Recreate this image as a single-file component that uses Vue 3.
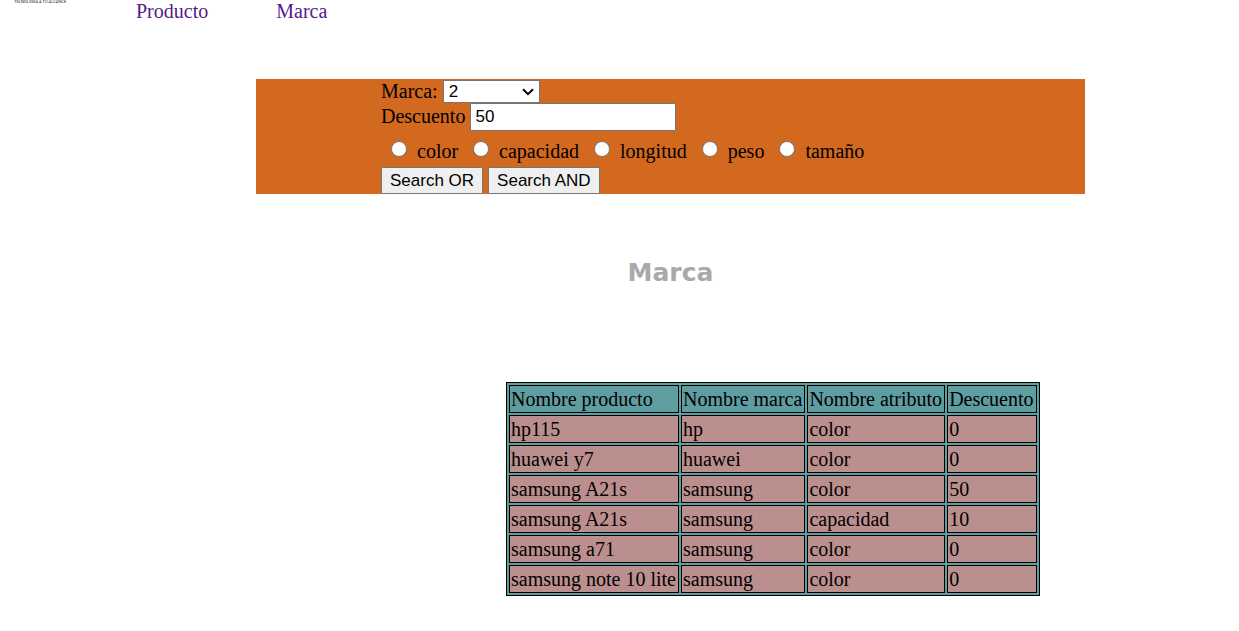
<script setup>
import { ref } from 'vue'

const marca = ref('2')
const descuento = ref('50')
const atributo = ref('')
const marcas = ['1', '2', '3']
const atributos = ['color', 'capacidad', 'longitud', 'peso', 'tamaño']
const columnas = ['Nombre producto', 'Nombre marca', 'Nombre atributo', 'Descuento']
const filas = [
  ['hp115', 'hp', 'color', '0'],
  ['huawei y7', 'huawei', 'color', '0'],
  ['samsung A21s', 'samsung', 'color', '50'],
  ['samsung A21s', 'samsung', 'capacidad', '10'],
  ['samsung a71', 'samsung', 'color', '0'],
  ['samsung note 10 lite', 'samsung', 'color', '0'],
]
</script>

<template>
  <div class="page">
    <header class="top">
      <div class="logo"><span>TECNOLOGÍA A TU ALCANCE</span></div>
      <nav class="menu">
        <a href="#producto">Producto</a>
        <a href="#marca">Marca</a>
      </nav>
    </header>

    <form class="search" @submit.prevent>
      <div class="row field">
        <label for="marca">Marca:</label>
        <select id="marca" v-model="marca">
          <option v-for="m in marcas" :key="m" :value="m">{{ m }}</option>
        </select>
        <svg class="chevron" viewBox="0 0 12 8" aria-hidden="true">
          <path d="M1 1.2 6 6.2 11 1.2" fill="none" stroke="#000" stroke-width="2" />
        </svg>
      </div>
      <div class="row field">
        <label for="descuento">Descuento</label>
        <input id="descuento" v-model="descuento" class="text" type="text" />
      </div>
      <div class="row radios">
        <label v-for="a in atributos" :key="a">
          <input v-model="atributo" type="radio" name="atributo" :value="a" />
          <span>{{ a }}</span>
        </label>
      </div>
      <div class="row">
        <button type="submit">Search OR</button>
        <button type="submit">Search AND</button>
      </div>
    </form>

    <h1>Marca</h1>

    <table>
      <thead>
        <tr>
          <th v-for="c in columnas" :key="c" scope="col">{{ c }}</th>
        </tr>
      </thead>
      <tbody>
        <tr v-for="(f, i) in filas" :key="i">
          <td v-for="(v, j) in f" :key="j">{{ v }}</td>
        </tr>
      </tbody>
    </table>
  </div>
</template>

<style>
body {
  background: #fff;
}
</style>

<style scoped>
.page {
  font: 20px/22px "Liberation Serif", "Times New Roman", serif;
  color: #000;
}
.top {
  display: flex;
  align-items: flex-start;
  height: 79px;
}
.logo {
  display: flex;
  align-items: flex-end;
  box-sizing: border-box;
  width: 136px;
  height: 4px;
  padding-left: 14px;
  overflow: hidden;
  font: 4px/4px Roboto, "Liberation Sans", sans-serif;
  color: #222;
  white-space: nowrap;
}
.menu {
  display: flex;
  gap: 68px;
}
.menu a {
  color: #551a8b;
  text-decoration: none;
}
.search {
  display: flex;
  flex-direction: column;
  margin: 0 154px 0 256px;
  padding: 1px 0 0 125px;
  background: chocolate;
}
.row {
  display: flex;
  align-items: center;
  gap: 5px;
}
.field label {
  line-height: 20px;
  padding-bottom: 2px;
}
select,
.text,
button {
  box-sizing: border-box;
  margin: 0;
  border: 1px solid #767676;
  border-radius: 0;
  font: 17px/20px "Liberation Sans", Arial, sans-serif;
  color: #000;
}
select {
  appearance: none;
  width: 97px;
  height: 23px;
  padding: 0 24px 0 5px;
  background: #fff;
}
.chevron {
  width: 12px;
  height: 8px;
  margin-left: -23px;
  pointer-events: none;
}
.text {
  width: 206px;
  height: 28px;
  padding: 0 4px;
  background: #fff;
}
.radios {
  height: 36px;
  padding: 0 0 0 10px;
  gap: 15px;
}
.radios label {
  display: flex;
  align-items: center;
  gap: 10px;
}
.radios span {
  padding-top: 3px;
}
.radios input {
  appearance: none;
  box-sizing: border-box;
  width: 16px;
  height: 16px;
  margin: 0;
  border: 1px solid #767676;
  border-radius: 50%;
  background: #fff;
}
.radios input:checked {
  border: 5px solid #0075ff;
}
button {
  height: 27px;
  padding: 0 8px;
  background: #efefef;
  border-radius: 1px;
}
h1 {
  margin: 64px 154px 94px 256px;
  font: bold 25px/30px "DejaVu Sans", Verdana, sans-serif;
  color: darkgray;
  text-align: center;
}
table {
  margin-left: 506px;
  border: 1px solid #000;
  border-spacing: 2px;
  background: cadetblue;
}
th,
td {
  padding: 1px 2px 1px 1px;
  border: 1px solid #000;
  font-weight: normal;
  line-height: 24px;
  text-align: left;
  white-space: nowrap;
}
td {
  background: rosybrown;
}
</style>
